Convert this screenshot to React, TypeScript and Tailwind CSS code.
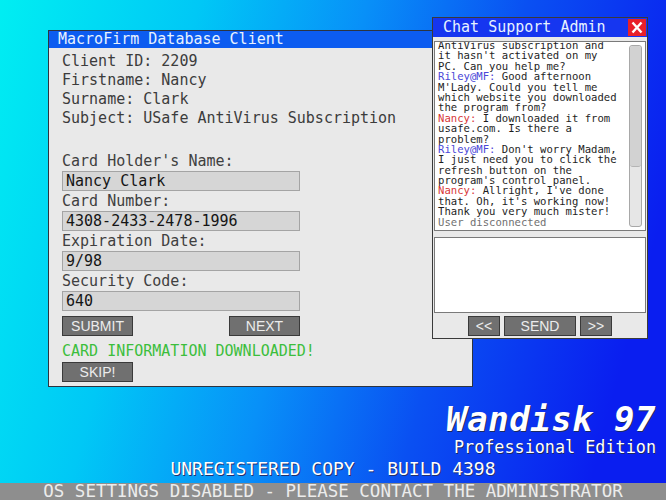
import React from "react";

const mono = "font-['DejaVu_Sans_Mono',monospace]";
const sans = "font-['Liberation_Sans',Arial,sans-serif]";

type Line = { who?: "riley" | "nancy" | "sys"; text: string };

const chat: Line[] = [
  { text: "AntiVirus subscription and" },
  { text: "it hasn't activated on my" },
  { text: "PC. Can you help me?" },
  { who: "riley", text: " Good afternoon" },
  { text: "M'Lady. Could you tell me" },
  { text: "which website you downloaded" },
  { text: "the program from?" },
  { who: "nancy", text: " I downloaded it from" },
  { text: "usafe.com. Is there a" },
  { text: "problem?" },
  { who: "riley", text: " Don't worry Madam," },
  { text: "I just need you to click the" },
  { text: "refresh button on the" },
  { text: "program's control panel." },
  { who: "nancy", text: " Allright, I've done" },
  { text: "that. Oh, it's working now!" },
  { text: "Thank you very much mister!" },
  { who: "sys", text: "User disconnected" },
];

function Field({ label, value }: { label: string; value: string }) {
  return (
    <>
      <div className="h-5 leading-5 text-[#404040]">{label}</div>
      <div className="h-5 w-[238px] border border-[#a4a4a4] bg-[#d6d6d6] pl-[3px] leading-[18px] text-[#151515]">
        {value}
      </div>
    </>
  );
}

function Btn({ children, w }: { children: React.ReactNode; w: string }) {
  return (
    <div
      className={`${w} ${sans} flex h-5 items-center justify-center border border-[#3a3a3a] bg-[#707070] text-[14px] leading-none text-[#ececec]`}
    >
      {children}
    </div>
  );
}

export default function App() {
  return (
    <div className="relative flex h-[500px] w-[666px] flex-col overflow-hidden bg-[linear-gradient(105deg,#00eef2_0%,#00c8f6_25%,#0890f8_46%,#0a50f2_66%,#0a1ef0_90%)]">
      {/* desktop windows */}
      <div className={`relative flex-1 ${mono} text-[15px]`}>
        {/* database client */}
        <div className="absolute left-[48px] top-[30px] flex h-[357px] w-[425px] flex-col border border-[#2c3440] bg-[#e9e9e9]">
          <div className="h-[17px] bg-[#0c5cf0] pl-[9px] leading-[17px] text-[#e6f2ff]">MacroFirm Database Client</div>
          <div className="flex flex-col pl-[13px] pt-[4px] text-[#3c3c3c]">
            <div className="leading-[19px]">Client ID: 2209</div>
            <div className="leading-[19px]">Firstname: Nancy</div>
            <div className="leading-[19px]">Surname: Clark</div>
            <div className="leading-[19px]">Subject: USafe AntiVirus Subscription</div>
            <div className="mt-[23px] flex flex-col">
              <Field label="Card Holder's Name:" value="Nancy Clark" />
              <Field label="Card Number:" value="4308-2433-2478-1996" />
              <Field label="Expiration Date:" value="9/98" />
              <Field label="Security Code:" value="640" />
            </div>
            <div className="mt-[5px] flex w-[238px] justify-between">
              <Btn w="w-[71px]">SUBMIT</Btn>
              <Btn w="w-[71px]">NEXT</Btn>
            </div>
            <div className="mt-[5px] h-5 leading-5 text-[#3cbe3c]">CARD INFORMATION DOWNLOADED!</div>
            <div className="mt-[1px]">
              <Btn w="w-[71px]">SKIP!</Btn>
            </div>
          </div>
        </div>

        {/* chat window */}
        <div className="absolute left-[432px] top-[17px] flex h-[322px] w-[216px] flex-col border border-[#3a3a3a] bg-[#e9e9e9]">
          <div className="flex h-[19px] items-center justify-between bg-[#1636f0] pl-[10px] pr-[1px] text-[#e6f2ff]">
            <span className="leading-[19px]">Chat Support Admin</span>
            <div className="flex h-[17px] w-[18px] items-center justify-center bg-[#e8202a]">
              <svg width="12" height="13" viewBox="0 0 12 13">
                <path d="M1.5 1.5 L10.5 11.5 M10.5 1.5 L1.5 11.5" stroke="#fff" strokeWidth="2.4" />
              </svg>
            </div>
          </div>
          <div className="mx-[1px] mt-[4px] flex h-[190px] overflow-hidden border border-[#7a7a7a] bg-white">
            <div className="mt-[-2px] flex-1 pl-[3px] text-[10.6px] leading-[10.4px] text-[#1e1e1e]">
              {chat.map((l, i) => (
                <div key={i} className="h-[10.4px] whitespace-pre">
                  {l.who === "riley" && <span className="text-[#4a48d8]">Riley@MF:</span>}
                  {l.who === "nancy" && <span className="text-[#d83838]">Nancy:</span>}
                  {l.who === "sys" ? <span className="text-[#707070]">{l.text}</span> : l.text}
                </div>
              ))}
            </div>
            <div className="mr-[3px] mt-[3px] mb-[3px] flex w-[13px] flex-col rounded-[3px] border border-[#a8a8a8] bg-[#e6e6e6]">
              <div className="h-[121px] rounded-[3px] border-b border-[#b4b4b4] bg-[#d2d2d2]" />
            </div>
          </div>
          <div className="mx-[1px] mt-[6px] h-[76px] border border-[#7a7a7a] bg-white" />
          <div className={`mt-[3px] flex justify-center gap-[4px] ${sans}`}>
            <Btn w="w-[32px]">&lt;&lt;</Btn>
            <Btn w="w-[72px]">SEND</Btn>
            <Btn w="w-[32px]">&gt;&gt;</Btn>
          </div>
        </div>
      </div>

      {/* branding */}
      <div className={`flex flex-col items-end pr-[10px] ${mono} text-white`}>
        <div className="text-[34px] font-bold italic leading-[36px] tracking-[0.5px] [text-shadow:1px_1px_0_#1a2a60]">
          Wandisk 97
        </div>
        <div className="mt-[1px] text-[16.8px] leading-[18px] [text-shadow:1px_1px_0_#1a2a60]">Professional Edition</div>
      </div>
      <div className={`mt-[2px] text-center ${mono} text-[18px] leading-[22px] text-white [text-shadow:1px_1px_0_#203070]`}>
        UNREGISTERED COPY - BUILD 4398
      </div>
      <div className={`mt-[3px] h-[17px] bg-[#8e8e8e] text-center ${mono} text-[17.5px] leading-[17px] text-[#ececec]`}>
        OS SETTINGS DISABLED - PLEASE CONTACT THE ADMINISTRATOR
      </div>
    </div>
  );
}
